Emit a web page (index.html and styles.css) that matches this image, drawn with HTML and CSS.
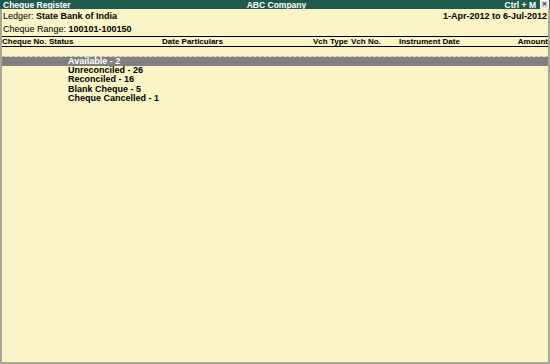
FILE: index.html
```html
<!DOCTYPE html>
<html lang="en">
<head>
  <meta charset="UTF-8">
  <title>Cheque Register</title>
  <link rel="stylesheet" href="styles.css">
</head>
<body>

<div class="window">
  <div class="title-bar">
    <span class="title-left">Cheque Register</span>
    <span class="title-mid">ABC Company</span>
    <span class="title-right">Ctrl + M <span class="close-box">&#x2715;</span></span>
  </div>

  <div class="info-row">
    <span>Ledger: <b>State Bank of India</b></span>
    <b>1-Apr-2012 to 6-Jul-2012</b>
  </div>
  <div class="info-row">
    <span>Cheque Range: <b>100101-100150</b></span>
  </div>

  <!-- column headings -->
  <div class="col-head">
    <span class="c-no">Cheque No.</span>
    <span class="c-status">Status</span>
    <span class="c-date">Date Particulars</span>
    <span class="c-type">Vch Type</span>
    <span class="c-vno">Vch No.</span>
    <span class="c-inst">Instrument Date</span>
    <span class="c-amt">Amount</span>
  </div>

  <div class="spacer"></div>

  <ul class="status-list">
    <li class="selected">Available - 2</li>
    <li>Unreconciled - 26</li>
    <li>Reconciled - 16</li>
    <li>Blank Cheque - 5</li>
    <li>Cheque Cancelled - 1</li>
  </ul>
</div>

</body>
</html>
```

FILE: styles.css
```css
html, body {
  margin: 0;
  padding: 0;
  background: #faf4c6;
  font-family: 'Liberation Sans', Arial, sans-serif;
  font-size: 9px;
  color: #000;
}

.window {
  width: 550px;
  height: 364px;
  box-sizing: border-box;
  border-left: 2px solid #a9a79a;
  border-right: 2px solid #a9a79a;
  border-bottom: 2px solid #a9a79a;
  background: #faf4c6;
}

.title-bar {
  display: flex;
  align-items: center;
  height: 9px;
  background: #1f5b4c;
  color: #fff;
  font-weight: bold;
  font-size: 8.5px;
  padding: 0 0 0 2px;
  margin-left: -2px;
  margin-right: -2px;
  white-space: nowrap;
}

.title-left {
  flex: 1;
  padding-left: 1px;
}

.title-mid {
  flex: 1;
  text-align: center;
}

.title-right {
  flex: 1;
  display: flex;
  justify-content: flex-end;
  align-items: center;
  gap: 4px;
}

.close-box {
  display: inline-block;
  width: 7px;
  height: 7px;
  line-height: 7px;
  font-size: 6px;
  text-align: center;
  background: #ddd;
  color: #333;
  border: 1px solid #fff;
  margin-right: 1px;
}

.info-row {
  display: flex;
  justify-content: space-between;
  height: 12px;
  line-height: 12px;
  padding: 0 1px;
  margin-top: 1px;
  white-space: nowrap;
}

.col-head {
  display: flex;
  height: 9px;
  line-height: 9px;
  font-size: 8px;
  font-weight: bold;
  white-space: nowrap;
  border-top: 1px solid #000;
  border-bottom: 1px solid #000;
  margin-top: 1px;
}

.col-head span {
  flex-shrink: 0;
}

.c-no { width: 47px; }
.c-status { width: 113px; }
.c-date { width: 151px; }
.c-type { width: 38px; }
.c-vno { width: 48px; }
.c-inst { flex: 1; }
.c-amt { text-align: right; }

.spacer {
  height: 9px;
  border-bottom: 1px dashed #b9b79e;
}

.status-list {
  list-style: none;
  margin: 0;
  padding: 0;
  font-weight: bold;
  white-space: nowrap;
}

.status-list li {
  height: 9.33px;
  line-height: 9.33px;
  padding-left: 66px;
}

.status-list li.selected {
  height: 9px;
  line-height: 9px;
  background: #808080;
  color: #fff;
}
```
